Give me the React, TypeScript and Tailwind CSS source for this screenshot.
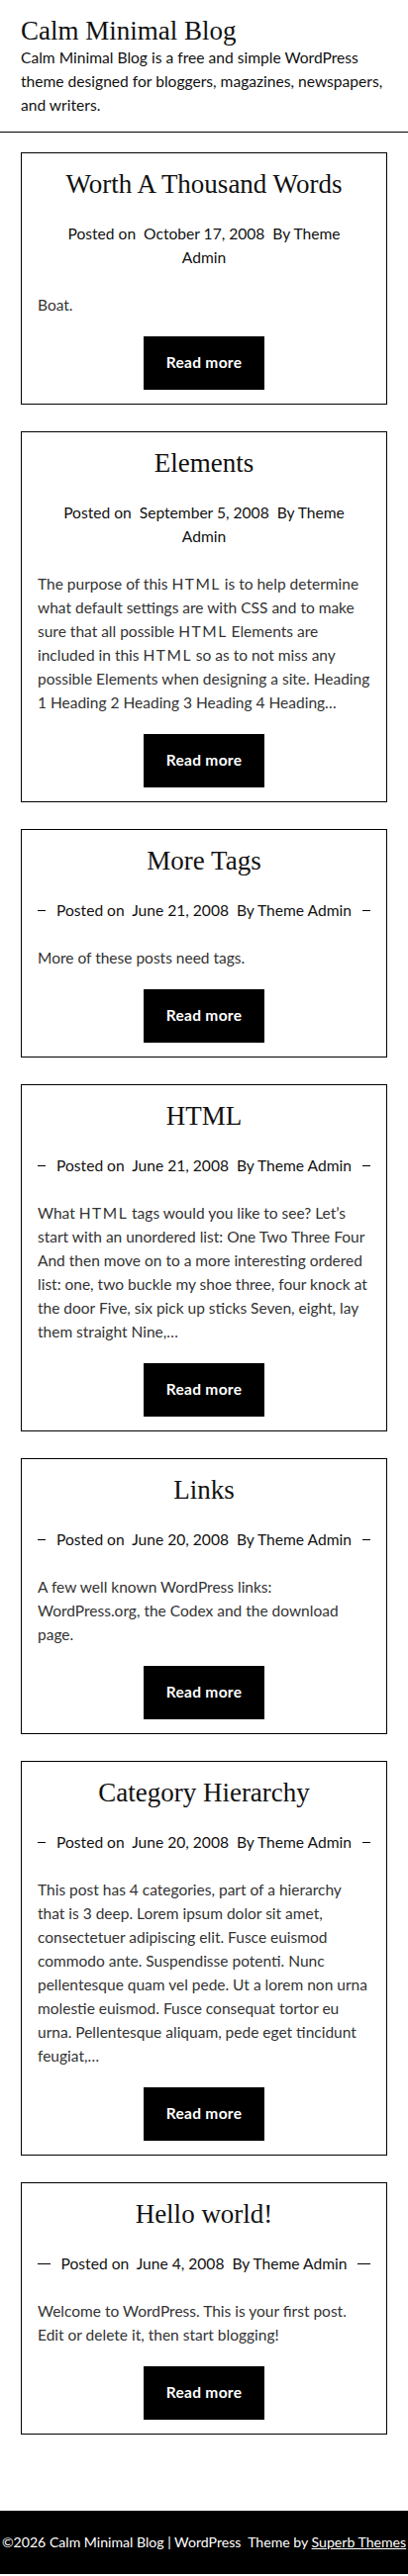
const posts = [
  {
    title: "Worth A Thousand Words",
    date: "October 17, 2008",
    excerpt: "Boat.",
  },
  {
    title: "Elements",
    date: "September 5, 2008",
    excerpt:
      "The purpose of this HTML is to help determine what default settings are with CSS and to make sure that all possible HTML Elements are included in this HTML so as to not miss any possible Elements when designing a site. Heading 1 Heading 2 Heading 3 Heading 4 Heading…",
  },
  {
    title: "More Tags",
    date: "June 21, 2008",
    excerpt: "More of these posts need tags.",
  },
  {
    title: "HTML",
    date: "June 21, 2008",
    excerpt:
      "What HTML tags would you like to see? Let’s start with an unordered list: One Two Three Four And then move on to a more interesting ordered list: one, two buckle my shoe three, four knock at the door Five, six pick up sticks Seven, eight, lay them straight Nine,…",
  },
  {
    title: "Links",
    date: "June 20, 2008",
    excerpt: "A few well known WordPress links: WordPress.org, the Codex and the download page.",
  },
  {
    title: "Category Hierarchy",
    date: "June 20, 2008",
    excerpt:
      "This post has 4 categories, part of a hierarchy that is 3 deep. Lorem ipsum dolor sit amet, consectetuer adipiscing elit. Fusce euismod commodo ante. Suspendisse potenti. Nunc pellentesque quam vel pede. Ut a lorem non urna molestie euismod. Fusce consequat tortor eu urna. Pellentesque aliquam, pede eget tincidunt feugiat,…",
  },
  {
    title: "Hello world!",
    date: "June 4, 2008",
    excerpt: "Welcome to WordPress. This is your first post. Edit or delete it, then start blogging!",
  },
]

const serif = "font-['Liberation_Serif',serif]"

const spreadAcronyms = (text: string) =>
  text.split(/(HTML)/).map((part, i) =>
    part === "HTML" ? (
      <span key={i} className="tracking-[1.5px]">
        HTML
      </span>
    ) : (
      part
    )
  )

const PostCard: React.FC<{ title: string; date: string; excerpt: string }> = ({ title, date, excerpt }) => {
  return (
    <article className="border border-black px-4 pt-4 pb-[14px] mb-[27px]">
      <h2 className={`${serif} text-[27px] leading-[30px] text-center text-[#111]`}>{title}</h2>
      {/* meta row: side rules grow to fill, vanish when the text wraps */}
      <div className="mt-[23px] flex items-center text-[15.6px] leading-6 text-[#111]">
        <span className="flex-1 basis-0 h-px bg-black mr-[11px]" />
        <p className="text-center">{`Posted on\u00a0 ${date}\u00a0 By Theme Admin`}</p>
        <span className="flex-1 basis-0 h-px bg-black ml-[11px]" />
      </div>
      <p className="mt-6 text-[15.5px] leading-6 text-[#333]">{spreadAcronyms(excerpt)}</p>
      <div className="mt-5 flex justify-center">
        <a
          href="#"
          className="flex items-center justify-center w-[122px] h-[54px] bg-black text-white font-bold text-[15.5px] tracking-[0.3px]"
        >
          Read more
        </a>
      </div>
    </article>
  )
}

const App: React.FC = () => {
  return (
    <div className="bg-white font-['Lato',sans-serif] text-[#111]">
      <header className="px-[21px] pt-4 pb-[15px] border-b border-black">
        <h1 className={`${serif} text-[27px] leading-[30px] text-[#111]`}>Calm Minimal Blog</h1>
        <p className="text-[15.6px] leading-6 text-[#111]">
          Calm Minimal Blog is a free and simple WordPress theme designed for bloggers, magazines, newspapers, and
          writers.
        </p>
      </header>

      <main className="px-[21px] pt-5 pb-[50px]">
        {posts.map((p) => (
          <PostCard key={p.title} {...p} />
        ))}
      </main>

      <footer className="bg-black h-16 flex items-center justify-center text-white text-[14.1px] whitespace-nowrap">
        ©2026 Calm Minimal Blog | WordPress&nbsp; Theme by&nbsp;<a href="#" className="underline">Superb Themes</a>
      </footer>
    </div>
  )
}

export default App
